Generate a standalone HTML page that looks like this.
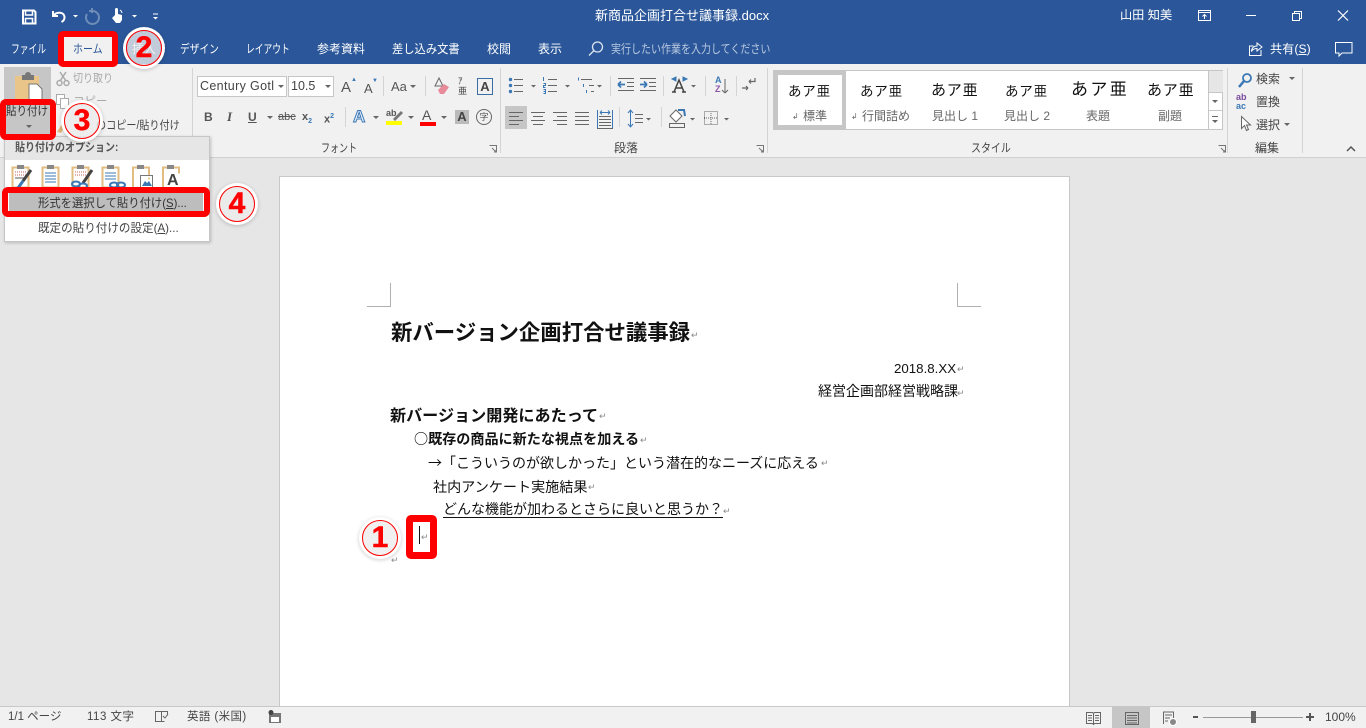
<!DOCTYPE html>
<html lang="ja"><head><meta charset="utf-8"><title>新商品企画打合せ議事録.docx</title>
<style>
html,body{margin:0;padding:0;width:1366px;height:728px;overflow:hidden;background:#e6e6e6;font-family:"Liberation Sans","Noto Sans CJK JP",sans-serif;}
div,span{position:absolute;white-space:nowrap;}
u,b,i{position:static}
svg{position:absolute;overflow:visible}
.tab{color:#fff;font-size:12px;top:41px;line-height:16px;transform-origin:0 50%}
.rb{color:#666;font-size:11.5px;line-height:14px;transform-origin:0 50%}
.g{color:#444;font-size:12px;top:141px;line-height:15px;transform-origin:0 50%}
.sep{width:1px;background:#d4d4d4}
.bi{color:#555;font-weight:bold;font-size:11px;line-height:14px;top:110px}
.sty{color:#111;font-size:14.5px;top:83px;line-height:18px;letter-spacing:.8px}
.stl{color:#666;font-size:12px;top:109px;line-height:15px}
.doc{color:#111;line-height:18px;font-family:"Noto Sans CJK JP","Liberation Sans",sans-serif;font-size:14px}
.pm{color:#888;font-size:9px;line-height:10px}
.st{color:#444;font-size:11.5px;top:709px;line-height:16px}
.red{border:5px solid #f00;border-radius:4px;box-sizing:border-box}
.num{width:36px;height:36px;border-radius:50%;background:rgba(236,236,236,.78);border:1.5px solid #f00;box-shadow:0 0 0 3px #fff,0 1px 4px 3px rgba(0,0,0,.2);box-sizing:border-box;color:#f00;font-weight:bold;font-size:30px;line-height:33px;text-align:center;-webkit-text-stroke:.5px #f00}
.dd{width:0;height:0;border:3px solid transparent;border-top:3px solid #666;border-bottom:0}
</style></head><body>
<!-- Title bar -->
<div style="left:0;top:0;width:1366px;height:64px;background:#2b579a"></div>
<svg style="left:0;top:0" width="170" height="30" fill="none" stroke="#fff">
<path d="M23 10.500h11l1.500 1.500v11.500h-12.500z" stroke-width="2"/><path d="M25.500 11v4h7v-4M25.500 23v-4.500h7V23" stroke-width="1.500"/>
<path d="M53 11v5h5M53.500 15.500c3-4 11-4 11 2c0 2-1 3.500-3 4.500" stroke-width="2"/>
<path d="M73 15l2.500 2.500 2.500-2.500z" fill="#fff" stroke="none"/>
<path d="M87 14a6.500 6.500 0 1 0 5-3h-3M92 8v5" stroke="#6f8db9" stroke-width="2"/>
<path d="M115 15V9.500a1.500 1.500 0 0 1 3 0V14l4 1v5l-2 3h-4l-4-5z" fill="#fff" stroke="none"/><path d="M120 10a4 4 0 0 1 2 3" stroke-width="1"/>
<path d="M132 15l2.500 2.500 2.500-2.500zM153 17l2.500 2.500 2.500-2.500z" fill="#fff" stroke="none"/><path d="M153 14h5" stroke-width="1"/>
</svg>
<div style="left:595px;top:8px;color:#fff;font-size:13px;line-height:16px">新商品企画打合せ議事録.docx</div>
<div style="left:1120px;top:7px;color:#fff;font-size:12.200px;line-height:16px">山田 知美</div>
<svg style="left:1190px;top:0" width="176" height="64" fill="none" stroke="#fff">
<rect x="8.500" y="10.500" width="12" height="10"/><path d="M8.500 12.500h12M14.500 19v-4M12.500 16.500l2-2 2 2"/>
<path d="M56 15.500h10"/>
<rect x="102.500" y="13.500" width="7" height="7"/><path d="M104.500 13.500v-2h7v7h-2"/>
<path d="M148 10.500l10 10M158 10.500l-10 10" stroke-width="1.200"/>
<path d="M71 50v5.500H59.500V46h4M67 43l5 4-5 4v-2.500c-3 0-4.500 1-5.500 3 0-3 2-5.500 5.500-5.500z"/>
<path d="M145.500 42.500h16.500v10.500h-10l-3 3v-3h-3.500z"/>
</svg>
<div style="left:1270px;top:41px;color:#fff;font-size:12.200px;line-height:16px">共有(<u>S</u>)</div>
<!-- Tabs -->
<div class="tab" style="left:11px;transform:scaleX(.73)">ファイル</div>
<div style="left:63px;top:36px;width:52px;height:28px;background:#f1f1f1"></div>
<div class="tab" style="left:73px;color:#2b579a;transform:scaleX(.83)">ホーム</div>
<div class="tab" style="left:132px">挿入</div>
<div class="tab" style="left:180px;transform:scaleX(.81)">デザイン</div>
<div class="tab" style="left:246px;transform:scaleX(.73)">レイアウト</div>
<div class="tab" style="left:317px">参考資料</div>
<div class="tab" style="left:392px;transform:scaleX(.94)">差し込み文書</div>
<div class="tab" style="left:487px">校閲</div>
<div class="tab" style="left:538px">表示</div>
<svg style="left:588px;top:40px" width="18" height="18" fill="none" stroke="#dce4f0" stroke-width="1.300"><circle cx="9.500" cy="7" r="5"/><path d="M6 10.500l-5 5"/></svg>
<div class="tab" style="left:611px;color:#b9c9e0;transform:scaleX(.833)">実行したい作業を入力してください</div>
<!-- Ribbon -->
<div style="left:0;top:64px;width:1366px;height:93px;background:#f1f1f1;border-bottom:1px solid #d0d0d0"></div>
<div class="sep" style="left:192px;top:68px;height:85px"></div>
<div class="sep" style="left:500px;top:68px;height:85px"></div>
<div class="sep" style="left:767px;top:68px;height:85px"></div>
<div class="sep" style="left:1227px;top:68px;height:85px"></div>
<div class="sep" style="left:1302px;top:68px;height:85px"></div>
<!-- Clipboard -->
<div style="left:4px;top:67px;width:47px;height:70px;background:#c6c6c6"></div>
<svg style="left:14px;top:70px" width="30" height="32"><rect x="1" y="6" width="24" height="24" fill="#e9c589"/><path d="M8 5h3a3 3 0 0 1 6 0h3v5H8z" fill="#777"/><path d="M15 14h8l5 5v12H15z" fill="#fff" stroke="#777"/></svg>
<svg style="left:56px;top:71px" width="14" height="16" fill="none" stroke="#aaa" stroke-width="1.500"><circle cx="3.500" cy="12" r="2.500"/><circle cx="10.500" cy="12" r="2.500"/><path d="M4 10L10 1M10 10L4 1"/></svg>
<div class="rb" style="left:73px;top:72px;color:#aaa;transform:scaleX(.87)">切り取り</div>
<svg style="left:55px;top:94px" width="15" height="15" fill="#fff" stroke="#aaa"><rect x="1.500" y=".500" width="8" height="10"/><rect x="5.500" y="4.500" width="8" height="10"/></svg>
<div class="rb" style="left:73px;top:95px;color:#aaa">コピー</div>
<svg style="left:56px;top:120px" width="14" height="14"><path d="M1 12l5-8 3 2-4 7z" fill="#e0b77a"/></svg>
<div class="rb" style="left:96px;top:119px;color:#444;transform:scaleX(.88)">のコピー/貼り付け</div>
<div style="left:6px;top:104px;color:#333;font-size:12px;line-height:15px;transform:scaleX(.875);transform-origin:0 50%">貼り付け</div>
<div class="dd" style="left:26px;top:125px"></div>
<!-- Font -->
<div style="left:197px;top:76px;width:90px;height:21px;background:#fff;border:1px solid #c6c6c6;box-sizing:border-box"></div>
<div style="left:288px;top:76px;width:46px;height:21px;background:#fff;border:1px solid #c6c6c6;box-sizing:border-box"></div>
<div style="left:200px;top:79px;color:#444;font-size:12.500px;line-height:15px;letter-spacing:.35px">Century Gotl</div>
<div class="dd" style="left:278px;top:85px"></div>
<div style="left:291px;top:79px;color:#444;font-size:12.500px;line-height:15px">10.5</div>
<div class="dd" style="left:325px;top:85px"></div>
<div style="left:341px;top:79px;color:#555;font-size:15px;line-height:18px">A</div>
<div style="left:351px;top:77px;color:#3a78b5;font-size:6px;line-height:6px">▲</div>
<div style="left:364px;top:81px;color:#555;font-size:13px;line-height:16px">A</div>
<div style="left:372px;top:78px;color:#3a78b5;font-size:6px;line-height:6px">▼</div>
<div class="sep" style="left:383px;top:76px;height:20px"></div>
<div style="left:391px;top:79px;color:#555;font-size:13px;line-height:16px">Aa</div>
<div class="dd" style="left:410px;top:85px"></div>
<div class="sep" style="left:425px;top:76px;height:20px"></div>
<svg style="left:433px;top:76px" width="18" height="20"><path d="M6 2l4 8H2z" fill="none" stroke="#666"/><path d="M5 14l6-6 5 3-5 7H7z" fill="#e88a9a"/></svg>
<div style="left:458px;top:76px;color:#444;font-size:9px;line-height:10px">ｱ<br>亜</div>
<div style="left:477px;top:78px;width:14px;height:15px;border:1px solid #3a6ea5;color:#444;font-size:13px;font-weight:bold;line-height:15px;text-align:center">A</div>
<div class="bi" style="left:204px;font-size:12px">B</div>
<div class="bi" style="left:227px;font-family:'Liberation Serif',serif;font-style:italic;font-size:13px">I</div>
<div class="bi" style="left:248px;font-size:12px"><u>U</u></div>
<div class="dd" style="left:267px;top:116px"></div>
<div class="bi" style="left:278px;font-weight:normal;text-decoration:line-through">abc</div>
<div class="bi" style="left:302px">x<sub style="font-size:7px;color:#3a78b5">2</sub></div>
<div class="bi" style="left:324px">x<sup style="font-size:7px;color:#3a78b5">2</sup></div>
<div class="sep" style="left:345px;top:107px;height:20px"></div>
<div style="left:353px;top:107px;color:#e8f0fa;font-size:17px;font-weight:bold;line-height:20px;-webkit-text-stroke:1px #3a78b5">A</div>
<div class="dd" style="left:373px;top:116px"></div>
<div style="left:386px;top:108px;color:#555;font-size:9px;line-height:10px"><b>ab</b></div>
<svg style="left:390px;top:108px" width="14" height="18"><path d="M3 11l8-8 2 2-8 8z" fill="#777"/></svg>
<div style="left:386px;top:121px;width:16px;height:4px;background:#ff0"></div>
<div class="dd" style="left:408px;top:116px"></div>
<div style="left:422px;top:108px;color:#555;font-size:14px;line-height:15px">A</div>
<div style="left:420px;top:122px;width:16px;height:4px;background:#f00"></div>
<div class="dd" style="left:441px;top:116px"></div>
<div style="left:455px;top:110px;width:14px;height:14px;background:#bbb;color:#444;font-size:13px;font-weight:bold;line-height:14px;text-align:center">A</div>
<div style="left:476px;top:109px;width:14px;height:14px;border:1px solid #666;border-radius:50%;color:#555;font-size:9px;line-height:14px;text-align:center">字</div>
<div class="g" style="left:321px;transform:scaleX(.75)">フォント</div>
<svg style="left:489px;top:145px" width="9" height="9" fill="none" stroke="#777"><path d="M.500 .500h7v7M3 3l4 4M5 7h2V5"/></svg>
<!-- Paragraph top row: origin 505,74 -->
<svg style="left:505px;top:74px" width="255" height="26" fill="none" stroke="#666">
<circle cx="5.500" cy="5.500" r="1.700" fill="#3a78b5" stroke="none"/><circle cx="5.500" cy="11.500" r="1.700" fill="#3a78b5" stroke="none"/><circle cx="5.500" cy="17.500" r="1.700" fill="#3a78b5" stroke="none"/>
<path d="M9 5.500h9M9 11.500h9M9 17.500h9"/>
<path d="M26 11l2.500 2.500L31 11z" fill="#666" stroke="none"/>
<path d="M43 5.500h9M43 11.500h9M43 17.500h9"/>
<path d="M38.500 3v4M38.500 9.500h2v2h-2v2h2M38.500 15.500h2v4h-2M38.500 17.500h2" stroke="#3a78b5"/>
<path d="M60 11l2.500 2.500L65 11z" fill="#666" stroke="none"/>
<path d="M76 5.500h11M84 11.500h5M86 17.500h3"/><path d="M73.500 3.500v3M78.500 10v3M81.500 16v3" stroke="#3a78b5"/>
<path d="M92 11l2.500 2.500L97 11z" fill="#666" stroke="none"/>
<path d="M113 4.500h16M122 8.500h7M122 12.500h7M113 16.500h16"/>
<path d="M113 10.500h7M113 10.500l3-3M113 10.500l3 3" stroke="#3a78b5" stroke-width="1.700"/>
<path d="M135 4.500h16M144 8.500h7M144 12.500h7M135 16.500h16"/>
<path d="M135 10.500h7M142 10.500l-3-3M142 10.500l-3 3" stroke="#3a78b5" stroke-width="1.700"/>
<path d="M169 18l5-12 5 12M171 14h7M167 18h4M177 18h4" stroke="#444" stroke-width="1.500"/><path d="M167 5l4-2v4zM182 5l-4-2v4z" fill="#3a78b5" stroke="#3a78b5"/>
<path d="M186 11l2.500 2.500L191 11z" fill="#666" stroke="none"/>
<path d="M220 5v14M220 19l-3-3M220 19l3-3"/>
<path d="M250 4v3.500h-6M244 7.500l2-2M244 7.500l2 2M243 14h-6M243 14l-2-2M243 14l-2 2" stroke-width="1.200"/>
</svg>
<div style="left:715px;top:76px;color:#3a78b5;font-size:9px;line-height:9px;font-weight:bold">A</div>
<div style="left:715px;top:85px;color:#8c57a8;font-size:9px;line-height:9px;font-weight:bold">Z</div>
<div class="sep" style="left:610px;top:76px;height:20px"></div>
<div class="sep" style="left:663px;top:76px;height:20px"></div>
<div class="sep" style="left:705px;top:76px;height:20px"></div>
<div class="sep" style="left:736px;top:76px;height:20px"></div>
<div style="left:505px;top:106px;width:22px;height:23px;background:#c6c6c6"></div>
<svg style="left:505px;top:106px" width="255" height="24" fill="none" stroke="#666">
<path d="M4 6.500h14M4 10.500h10M4 14.500h14M4 18.500h10"/>
<path d="M26 6.500h14M28 10.500h10M26 14.500h14M28 18.500h10"/>
<path d="M48 6.500h14M52 10.500h10M48 14.500h14M52 18.500h10"/>
<path d="M70 6.500h14M70 10.500h14M70 14.500h14M70 18.500h14"/>
<path d="M92.500 4v18M107.500 4v18" stroke="#3a78b5"/><path d="M95 6.500h10M95 6.500l2-2M95 6.500l2 2M105 6.500l-2-2M105 6.500l-2 2" stroke="#3a78b5"/><path d="M94 10.500h12M94 13.500h12M94 16.500h12M94 19.500h12M92 22.500h16"/>
<path d="M125.500 5v15M123 7l2.500-3 2.500 3M123 18l2.500 3 2.500-3" stroke="#3a78b5"/><path d="M130 8.500h8M130 12.500h8M130 16.500h8"/>
<path d="M141 12l2.500 2.500L146 12z" fill="#666" stroke="none"/>
<path d="M171 4l6 6-6 6-6-6z" fill="#fff"/><path d="M173 4h6l1 6" stroke="#3a78b5" stroke-width="2"/><rect x="164.500" y="17.500" width="15" height="4"/>
<path d="M185 12l2.500 2.500L190 12z" fill="#666" stroke="none"/>
<path d="M199.500 5.500h13v13h-13z" stroke-dasharray="1 1"/><path d="M206 5v13M199 12h13" stroke-dasharray="1 1"/>
<path d="M219 12l2.500 2.500L224 12z" fill="#666" stroke="none"/>
</svg>
<div class="sep" style="left:619px;top:107px;height:20px"></div>
<div class="sep" style="left:661px;top:107px;height:20px"></div>
<div class="g" style="left:614px">段落</div>
<svg style="left:756px;top:145px" width="9" height="9" fill="none" stroke="#777"><path d="M.500 .500h7v7M3 3l4 4M5 7h2V5"/></svg>
<!-- Styles -->
<div style="left:773px;top:70px;width:450px;height:60px;background:#fff;border:1px solid #c6c6c6;box-sizing:border-box"></div>
<div style="left:774px;top:71px;width:72px;height:58px;border:4px solid #c6c6c6;box-sizing:border-box"></div>
<div style="left:1208px;top:71px;width:14px;height:21px;background:#e6e6e6;border-left:1px solid #c6c6c6"></div>
<div style="left:1208px;top:92px;width:14px;height:18px;border-left:1px solid #c6c6c6;border-top:1px solid #c6c6c6"></div>
<div style="left:1208px;top:110px;width:14px;height:19px;border-left:1px solid #c6c6c6;border-top:1px solid #c6c6c6"></div>
<div class="dd" style="left:1212px;top:100px"></div>
<div class="dd" style="left:1212px;top:120px"></div>
<div style="left:1212px;top:116px;width:6px;height:1px;background:#666"></div>
<div class="sty" style="left:788px;font-size:13.500px;top:83px">あア亜</div>
<div class="sty" style="left:860px;font-size:13.500px;top:83px">あア亜</div>
<div class="sty" style="left:931px;font-size:15px;top:82px">あア亜</div>
<div class="sty" style="left:1005px;font-size:13.500px;top:83px">あア亜</div>
<div class="sty" style="left:1071px;font-size:17px;top:81px;letter-spacing:2.400px">あア亜</div>
<div class="sty" style="left:1147px;font-size:15px;top:82px">あア亜</div>
<div class="stl" style="left:792px;font-size:8px">↲</div>
<div class="stl" style="left:803px">標準</div>
<div class="stl" style="left:851px;font-size:8px">↲</div>
<div class="stl" style="left:862px">行間詰め</div>
<div class="stl" style="left:932px">見出し 1</div>
<div class="stl" style="left:1004px">見出し 2</div>
<div class="stl" style="left:1086px">表題</div>
<div class="stl" style="left:1158px">副題</div>
<div class="g" style="left:971px;transform:scaleX(.83)">スタイル</div>
<svg style="left:1218px;top:145px" width="9" height="9" fill="none" stroke="#777"><path d="M.500 .500h7v7M3 3l4 4M5 7h2V5"/></svg>
<!-- Editing -->
<svg style="left:1237px;top:72px" width="16" height="16" fill="none" stroke="#3a78b5" stroke-width="1.800"><circle cx="10" cy="6" r="4"/><path d="M7 9l-5 6" stroke-width="2.500"/></svg>
<div class="rb" style="left:1256px;top:72px;color:#444;font-size:12px">検索</div>
<div class="dd" style="left:1289px;top:77px"></div>
<div style="left:1236px;top:93px;color:#7a4a9e;font-size:9px;font-weight:bold;line-height:9px">ab</div>
<div style="left:1236px;top:102px;color:#3a78b5;font-size:9px;font-weight:bold;line-height:9px">ac</div>
<div class="rb" style="left:1256px;top:95px;color:#444;font-size:12px">置換</div>
<svg style="left:1240px;top:116px" width="12" height="16" fill="#fff" stroke="#666"><path d="M1.500 .500v12l3-3 2 5 2-1-2-4.500h4z"/></svg>
<div class="rb" style="left:1256px;top:118px;color:#444;font-size:12px">選択</div>
<div class="dd" style="left:1284px;top:123px"></div>
<div class="g" style="left:1255px">編集</div>
<svg style="left:1345px;top:145px" width="12" height="8" fill="none" stroke="#555" stroke-width="1.500"><path d="M2 6l4-4 4 4"/></svg>
<!-- Page -->
<div style="left:279px;top:176px;width:791px;height:530px;background:#fff;border:1px solid #c8c8c8;border-bottom:0;box-sizing:border-box"></div>
<svg style="left:366px;top:282px" width="620" height="26" fill="none" stroke="#b0b0b0"><path d="M1 24.500h23.500V1M615 24.500h-23.500V1"/></svg>
<div class="doc" style="left:391px;top:320px;font-size:21.400px;font-weight:bold;line-height:24px">新バージョン企画打合せ議事録</div>
<div class="pm" style="left:691px;top:330px">↵</div>
<div class="doc" style="left:894px;top:360px;font-size:13.300px;font-family:'Liberation Sans',sans-serif">2018.8.XX</div><div class="pm" style="left:957px;top:364px">↵</div>
<div class="doc" style="left:818px;top:382px">経営企画部経営戦略課</div><div class="pm" style="left:957px;top:388px">↵</div>
<div class="doc" style="left:390px;top:405px;font-size:16.100px;font-weight:bold">新バージョン開発にあたって</div><div class="pm" style="left:599px;top:411px">↵</div>
<div class="doc" style="left:414px;top:430px;font-weight:bold;font-size:14.100px">○既存の商品に新たな視点を加える</div><div class="pm" style="left:640px;top:435px">↵</div>
<div class="doc" style="left:428px;top:454px">→「こういうのが欲しかった」という潜在的なニーズに応える</div><div class="pm" style="left:821px;top:458px">↵</div>
<div class="doc" style="left:433px;top:478px;font-size:14.100px">社内アンケート実施結果</div><div class="pm" style="left:588px;top:482px">↵</div>
<div class="doc" style="left:443px;top:502px;border-bottom:1px solid #111;line-height:15px;height:15px">どんな機能が加わるとさらに良いと思うか？</div><div class="pm" style="left:723px;top:506px">↵</div>
<div class="pm" style="left:421px;top:532px">↵</div>
<div style="left:419px;top:526px;width:1px;height:18px;background:#111"></div>
<div class="pm" style="left:391px;top:555px">↵</div>
<!-- Paste menu -->
<div style="left:4px;top:136px;width:206px;height:106px;background:#fff;border:1px solid #c6c6c6;box-sizing:border-box;box-shadow:1px 1px 3px rgba(0,0,0,.2)"></div>
<div style="left:5px;top:137px;width:204px;height:23px;background:#e6e6e6"></div>
<div style="left:15px;top:141px;color:#555;font-size:11.500px;font-weight:bold;line-height:15px;transform:scaleX(.87);transform-origin:0 50%">貼り付けのオプション:</div>
<svg style="left:10px;top:163px" width="180" height="28" fill="none">
<rect x="2.500" y="4.500" width="16" height="20" fill="#fff" stroke="#e2bc80" stroke-width="2"/><rect x="7" y="2" width="7" height="4" fill="#888"/><path d="M5 9h11M5 12h11" stroke="#c9635a" stroke-dasharray="1 1"/><path d="M5 15h9" stroke="#555"/><path d="M21 7l-8 11" stroke="#444" stroke-width="3"/><path d="M13 18l-5 7" stroke="#3a78b5" stroke-width="3"/>
<rect x="32.500" y="4.500" width="16" height="20" fill="#fff" stroke="#e2bc80" stroke-width="2"/><rect x="37" y="2" width="7" height="4" fill="#888"/><path d="M35 10h11M35 13h11M35 16h11M35 19h11" stroke="#3a78b5"/>
<rect x="62.500" y="4.500" width="16" height="20" fill="#fff" stroke="#e2bc80" stroke-width="2"/><rect x="67" y="2" width="7" height="4" fill="#888"/><path d="M65 9h11M65 12h11" stroke="#c9635a" stroke-dasharray="1 1"/><path d="M82 7l-9 13" stroke="#444" stroke-width="3"/><ellipse cx="66" cy="21" rx="4" ry="2.500" stroke="#3a78b5" stroke-width="2"/><ellipse cx="73" cy="23" rx="4" ry="2.500" stroke="#3a78b5" stroke-width="2"/>
<rect x="92.500" y="4.500" width="16" height="20" fill="#fff" stroke="#e2bc80" stroke-width="2"/><rect x="97" y="2" width="7" height="4" fill="#888"/><path d="M95 10h11M95 13h11M95 16h11" stroke="#3a78b5"/><ellipse cx="104" cy="22" rx="4" ry="2.500" stroke="#3a78b5" stroke-width="2" fill="#fff"/><ellipse cx="111" cy="22" rx="4" ry="2.500" stroke="#3a78b5" stroke-width="2"/>
<path d="M123 24.500v-20h16v8" stroke="#e2bc80" stroke-width="2"/><rect x="127" y="2" width="7" height="4" fill="#888"/><rect x="130.500" y="12.500" width="12" height="12" fill="#fff" stroke="#777"/><path d="M132 23l3-5 2 2 2-2 3 5z" fill="#3a78b5"/><circle cx="139" cy="15.500" r="1" fill="#e2bc80"/>
<path d="M153 24.500v-20h16v6" stroke="#e2bc80" stroke-width="2"/><rect x="157" y="2" width="7" height="4" fill="#888"/>
</svg>
<div style="left:167px;top:173px;color:#444;font-size:16px;font-weight:bold;line-height:16px">A</div>
<div style="left:9px;top:193px;width:194px;height:19px;background:#bdbdbd"></div>
<div style="left:38px;top:196px;color:#333;font-size:11.800px;line-height:15px;transform:scaleX(.96);transform-origin:0 50%">形式を選択して貼り付け(<u>S</u>)...</div>
<div style="left:38px;top:221px;color:#444;font-size:11.800px;line-height:15px;transform:scaleX(.98);transform-origin:0 50%">既定の貼り付けの設定(<u>A</u>)...</div>
<!-- Status -->
<div style="left:0;top:706px;width:1366px;height:22px;background:#f1f1f1;border-top:1px solid #c8c8c8;box-sizing:border-box"></div>
<div class="st" style="left:8px">1/1 ページ</div>
<div class="st" style="left:87px;letter-spacing:.5px">113 文字</div>
<svg style="left:154px;top:709px" width="15" height="15" fill="none" stroke="#666"><path d="M1.500 2.500h6v10h-6zM7.500 2.500h6v4M7.500 12.500h3"/><path d="M9 7l2 2 3-4" stroke="#666"/></svg>
<div class="st" style="left:187px;letter-spacing:.4px">英語 (米国)</div>
<svg style="left:268px;top:710px" width="14" height="14"><rect x="1" y="3" width="12" height="10" fill="#777"/><rect x="3" y="7" width="8" height="5" fill="#fff"/><circle cx="3" cy="2.500" r="2.500" fill="#444"/></svg>
<div style="left:1112px;top:707px;width:38px;height:21px;background:#c6c6c6"></div>
<svg style="left:1080px;top:707px" width="130" height="21" fill="none" stroke="#666">
<path d="M6.500 5.500h6l1 1 1-1h6v11h-6l-1 1-1-1h-6zM13.500 6v11M8 8.500h4M8 11h4M8 13.500h4M15 8.500h4M15 11h4M15 13.500h4"/>
<rect x="45.500" y="5.500" width="13" height="12"/><path d="M47 8.500h10M47 11h10M47 13.500h10M47 16h10"/>
<path d="M83.500 17v-12h10v6M85 8h7M85 11h5M85 14h3"/><circle cx="93" cy="15" r="3.500" fill="#888" stroke="#fff"/>
</svg>
<div style="left:1193px;top:716px;width:5px;height:2px;background:#555"></div>
<div style="left:1203px;top:717px;width:100px;height:1px;background:#999"></div>
<div style="left:1251px;top:711px;width:5px;height:12px;background:#666"></div>
<div style="left:1306px;top:716px;width:8px;height:2px;background:#555"></div>
<div style="left:1309px;top:713px;width:2px;height:8px;background:#555"></div>
<div class="st" style="left:1325px;font-size:12px">100%</div>
<!-- Red callouts -->
<div class="red" style="left:58px;top:31px;width:60px;height:36px;border-width:6px;border-radius:5px"></div>
<div class="red" style="left:0;top:99px;width:56px;height:41px;border-width:6px;border-radius:6px"></div>
<div class="red" style="left:2px;top:187px;width:208px;height:30px;border-width:6px;border-radius:6px"></div>
<div class="red" style="left:406px;top:515px;width:31px;height:44px;border-width:7px;border-radius:5px"></div>
<div class="num" style="left:126px;top:30px">2</div>
<div class="num" style="left:64px;top:103px">3</div>
<div class="num" style="left:219px;top:186px">4</div>
<div class="num" style="left:362px;top:520px">1</div>
</body></html>
